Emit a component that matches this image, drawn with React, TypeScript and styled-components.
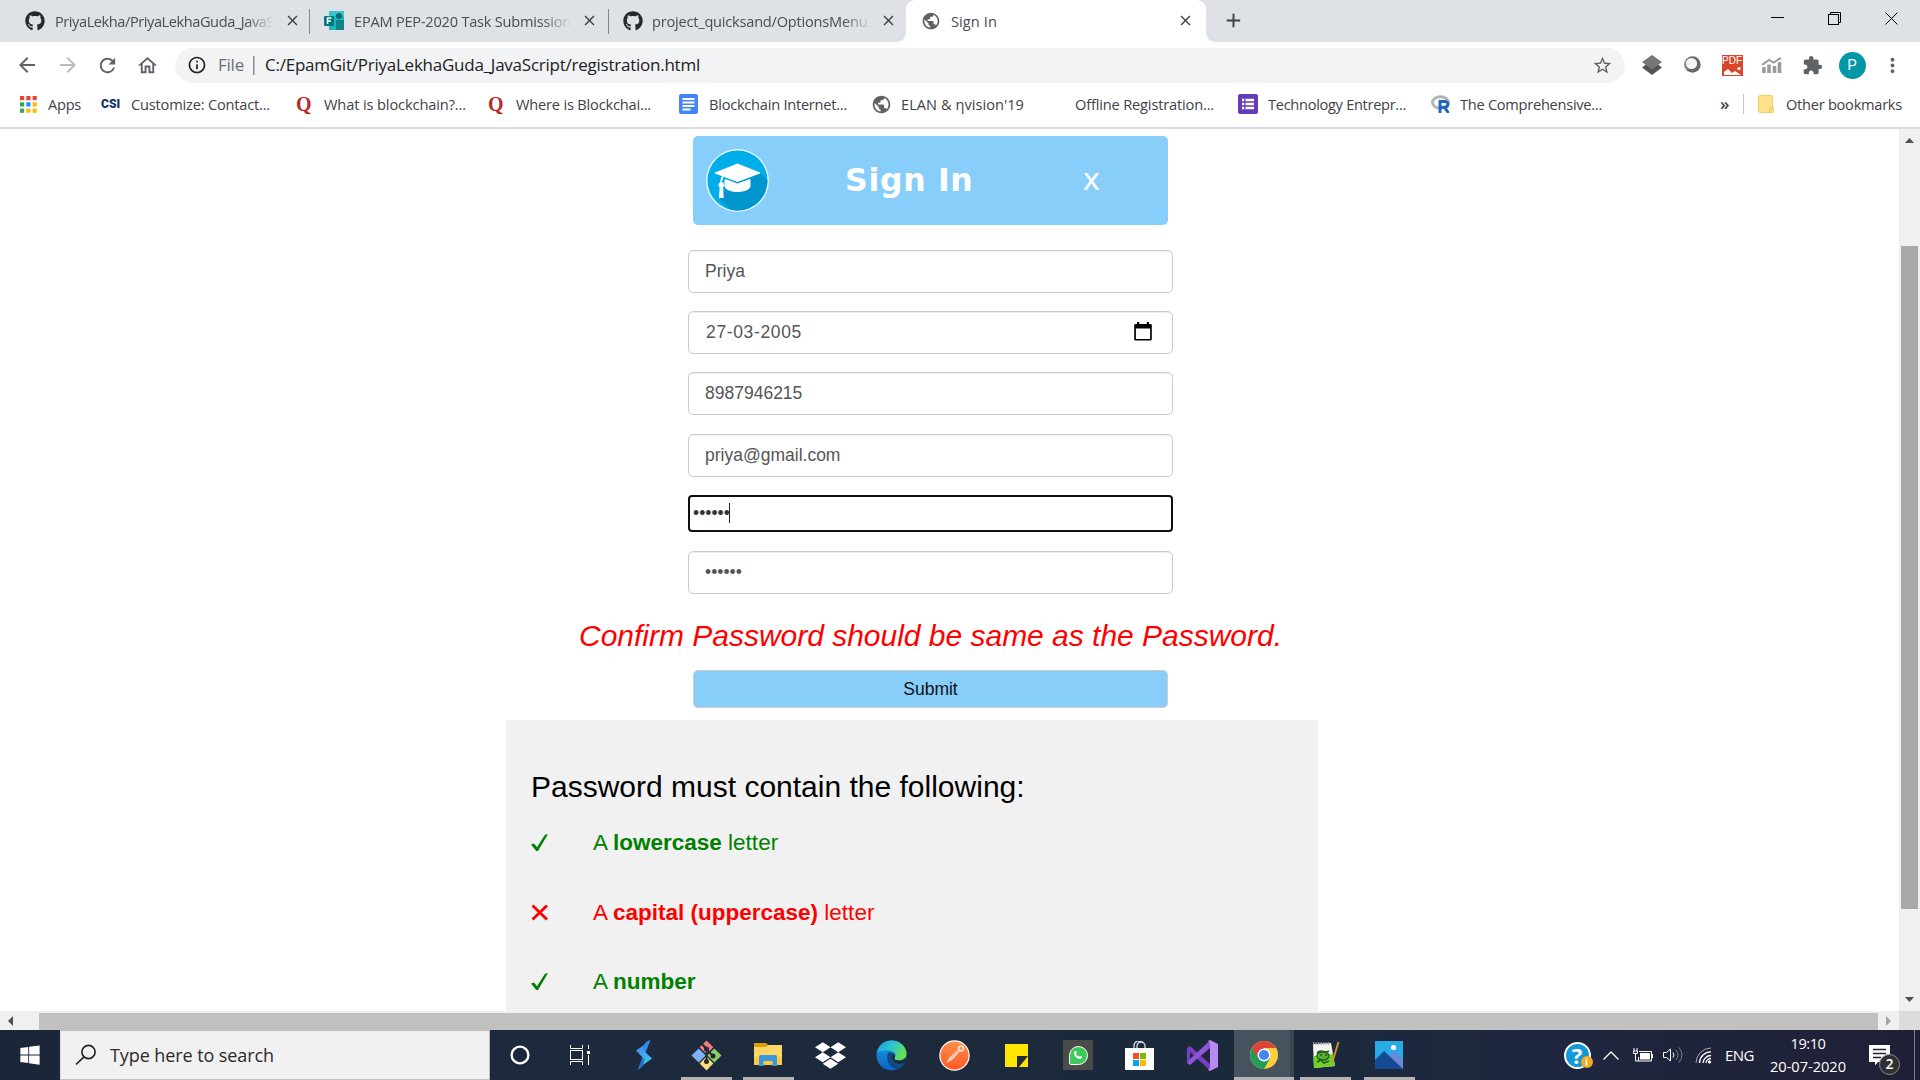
import React, { useLayoutEffect, useRef } from "react";
import styled, { createGlobalStyle, css } from "styled-components";
import {
  MdArrowBack, MdArrowForward, MdRefresh, MdOutlineHome, MdInfoOutline, MdStarBorder,
  MdExtension, MdMoreVert, MdPublic, MdClose, MdAdd,
} from "react-icons/md";
import { FaGithub, FaDropbox, FaWindows, FaWhatsapp } from "react-icons/fa";

const ui = '"Open Sans", "Noto Sans", sans-serif';
const arial = '"Liberation Sans", Arial, sans-serif';

const GlobalStyle = createGlobalStyle`
  * { box-sizing: border-box; }
  html, body { margin: 0; padding: 0; }
  body { width: 1920px; height: 1080px; overflow: hidden; background: #fff; }
  svg { display: block; flex: none; }
`;

/* ---------- text that fills a known width ---------- */
const FitBox = styled.span<{ $w: number; $fade?: boolean }>`
  display: block;
  flex: none;
  width: ${(p) => p.$w}px;
  white-space: nowrap;
  ${(p) => p.$fade && css`
    overflow: hidden;
    mask-image: linear-gradient(to right, #000 calc(100% - 28px), transparent);
  `}
`;

function Fit({ w, fade, children }: { w: number; fade?: boolean; children: string }) {
  const ref = useRef<HTMLSpanElement>(null);
  useLayoutEffect(() => {
    const el = ref.current;
    if (!el) return;
    el.style.letterSpacing = "0px";
    const natural = el.getBoundingClientRect().width;
    el.style.letterSpacing = `${(w - natural) / children.length}px`;
  }, [w, children]);
  return <FitBox $w={w} $fade={fade}><span ref={ref}>{children}</span></FitBox>;
}

/* ---------- window ---------- */
const Screen = styled.div`
  width: 1920px;
  height: 1080px;
  display: flex;
  flex-direction: column;
  overflow: hidden;
`;

const TabStrip = styled.div`
  height: 42px;
  flex: none;
  display: flex;
  background: #dee1e6;
`;

const Tab = styled.div<{ $w: number; $pad: number; $gap: number; $sep?: boolean }>`
  width: ${(p) => p.$w}px;
  padding-left: ${(p) => p.$pad}px;
  padding-bottom: 1px;
  display: flex;
  align-items: center;
  gap: ${(p) => p.$gap}px;
  font: 14.6px/20px ${ui};
  color: #4a4d51;
  background: linear-gradient(#83878c, #83878c) right 9px / ${(p) => (p.$sep ? "1px 25px" : "0 0")} no-repeat;
`;

const ActiveTab = styled(Tab)`
  position: relative;
  background: #fff;
  border-radius: 9px 9px 0 0;
  &::before, &::after {
    content: "";
    position: absolute;
    bottom: 0;
    width: 9px;
    height: 9px;
  }
  &::before { left: -9px; background: radial-gradient(circle at 0 0, transparent 8.5px, #fff 9px); }
  &::after { right: -9px; background: radial-gradient(circle at 100% 0, transparent 8.5px, #fff 9px); }
`;

const TabClose = styled.div<{ $right: number }>`
  margin-left: auto;
  margin-right: ${(p) => p.$right}px;
  width: 17px;
  color: #3c4043;
`;

const NewTab = styled.div`
  width: 55px;
  padding-bottom: 1px;
  display: flex;
  align-items: center;
  justify-content: center;
  color: #3c4043;
`;

const WindowControls = styled.div`
  margin-left: auto;
  width: 171px;
  height: 37px;
  display: flex;
  justify-content: space-around;
  align-items: center;
`;

const Toolbar = styled.div`
  height: 46px;
  flex: none;
  display: flex;
  align-items: center;
  background: #fff;
  color: #5f6368;
`;

const Nav = styled.div`
  width: 175px;
  display: flex;
  align-items: center;
  padding-left: 15px;
  gap: 16.5px;
`;

const Omnibox = styled.div`
  width: 1450px;
  height: 35px;
  border-radius: 18px;
  background: #f1f3f4;
  display: flex;
  align-items: center;
  padding: 0 12px 0 12px;
  font: 17px/24px ${ui};
  color: #202124;
`;

const Scheme = styled.div`
  margin-left: 11px;
  padding-right: 9px;
  color: #6b6f74;
`;

const Address = styled.div`
  padding-left: 12px;
  background: linear-gradient(#8b8f94, #8b8f94) left center / 1.5px 19px no-repeat;
`;

const StarSlot = styled.div`
  margin-left: auto;
`;

const Extensions = styled.div`
  display: flex;
  align-items: center;
  padding-left: 7px;
`;

const ExtSlot = styled.div`
  width: 40px;
  display: flex;
  justify-content: center;
`;

const Avatar = styled.div`
  width: 27px;
  height: 27px;
  border-radius: 50%;
  background: #0097a7;
  color: #fff;
  font: 15px/27px Roboto, sans-serif;
  text-align: center;
`;

const Bookmarks = styled.div`
  height: 41px;
  flex: none;
  display: flex;
  align-items: center;
  padding: 0 0 7px 0;
  border-bottom: 2px solid #dadce0;
  font: 14.6px/20px ${ui};
  color: #3f4246;
`;

const Bookmark = styled.div<{ $at: number; $gap: number }>`
  display: flex;
  align-items: center;
  gap: ${(p) => p.$gap}px;
  margin-left: ${(p) => p.$at}px;
`;

const Csi = styled.span`
  width: 20px;
  font: 900 12px/14px Roboto, sans-serif;
  color: #10306a;
`;

const Quora = styled.span`
  width: 16px;
  font: bold 20px/20px "Liberation Serif", serif;
  color: #b92b27;
`;

const BookmarksEnd = styled.div`
  margin-left: auto;
  margin-right: 18px;
  display: flex;
  align-items: center;
`;

const More = styled.span`
  width: 23px;
  font-size: 17px;
  line-height: 16px;
  font-weight: 600;
`;

const Divider = styled.span`
  width: 1px;
  height: 20px;
  background: #c6c9cd;
  margin-right: 14px;
`;

/* ---------- page ---------- */
const Viewport = styled.div`
  height: 882px;
  flex: none;
  display: flex;
`;

const Page = styled.div`
  width: 1899px;
  height: 882px;
  overflow: hidden;
  background: #fff;
  font-family: ${arial};
`;

const Form = styled.div`
  width: 1861px;
  padding-top: 7px;
  display: flex;
  flex-direction: column;
  align-items: center;
`;

const Banner = styled.div`
  width: 475px;
  height: 89px;
  margin-bottom: 25px;
  padding-left: 13px;
  border-radius: 5px;
  background: #87cefa;
  display: flex;
  align-items: center;
  color: #fff;
  font-family: "DejaVu Sans", Verdana, sans-serif;
`;

const BannerTitle = styled.h2`
  margin: 0 0 2px 76px;
  font-size: 31.5px;
  line-height: 36px;
  font-weight: bold;
`;

const BannerClose = styled.div`
  margin-left: 109px;
  margin-bottom: 2px;
  font-size: 30px;
  line-height: 36px;
`;

const Field = styled.div<{ $h?: number; $mb?: number; $focus?: boolean }>`
  width: 485px;
  height: ${(p) => p.$h ?? 43}px;
  margin-bottom: ${(p) => p.$mb ?? 18}px;
  padding: 0 20px 2px ${(p) => (p.$focus ? 3 : 16)}px;
  border: ${(p) => (p.$focus ? "2px solid #101010" : "1px solid #ccc")};
  border-radius: ${(p) => (p.$focus ? 4 : 5)}px;
  box-shadow: ${(p) => (p.$focus ? "none" : "inset 0 1px 1px rgba(0,0,0,.075)")};
  display: flex;
  align-items: center;
  font-size: 17.5px;
  line-height: 24px;
  color: ${(p) => (p.$focus ? "#333" : "#555")};
`;

const DateValue = styled.div`
  margin-left: 1px;
`;

const CalendarSlot = styled.div`
  margin-left: auto;
`;

const Caret = styled.span`
  width: 1px;
  height: 20px;
  margin-left: -1px;
  background: #222;
`;

const ErrorText = styled.div`
  margin-top: 24px;
  height: 52px;
  font-size: 30px;
  line-height: 36px;
  font-style: italic;
  color: #f00;
`;

const Submit = styled.div`
  width: 475px;
  height: 38px;
  border: 1px solid #ccc;
  border-radius: 5px;
  background: #87cefa;
  color: #111;
  text-align: center;
  font-size: 17.5px;
  line-height: 36px;
`;

const Rules = styled.div`
  margin: 12px 0 0 506px;
  width: 812px;
  height: 400px;
  padding: 49px 25px;
  background: #f1f1f1;
`;

const RulesTitle = styled.h3`
  margin: 0 0 20px;
  font-weight: normal;
  font-size: 30px;
  line-height: 36px;
  color: #000;
`;

const Rule = styled.div<{ $ok?: boolean }>`
  height: 69.6px;
  display: flex;
  align-items: flex-start;
  gap: 44px;
  padding-top: 5px;
  font-size: 22.5px;
  line-height: 26px;
  color: ${(p) => (p.$ok ? "green" : "red")};
  svg { margin-top: 4px; }
`;

/* ---------- scrollbars ---------- */
const VScroll = styled.div`
  width: 21px;
  height: 882px;
  background: #f0f0f0;
  display: flex;
  flex-direction: column;
  align-items: center;
  padding: 7px 0;
`;

const VThumb = styled.div`
  width: 17px;
  height: 663px;
  margin: 101px 0 auto;
  background: #a8a8a8;
`;

const HScroll = styled.div`
  height: 19px;
  flex: none;
  display: flex;
  align-items: center;
  background: #f0f0f0;
`;

const ArrowLeft = styled.svg`
  margin-left: 8px;
`;

const HThumb = styled.div`
  width: 1839px;
  height: 17px;
  margin: 2px 8px 0 26px;
  background: #c1c1c1;
`;

const Corner = styled.div`
  margin-left: auto;
  width: 21px;
  height: 19px;
  background: #dcdcdc;
`;

/* ---------- taskbar ---------- */
const Taskbar = styled.div`
  height: 50px;
  flex: none;
  display: flex;
  background: linear-gradient(90deg, #1b2739 0%, #1d2a3d 30%, #1b2a3b 65%, #1f2740 80%, #1f2036 100%);
  color: #fff;
  font-family: ${ui};
`;

const Start = styled.div`
  width: 60px;
  display: flex;
  align-items: center;
  justify-content: center;
`;

const Search = styled.div`
  width: 430px;
  border: 1px solid #bfbfbf;
  border-left-color: #dcdcdc;
  background: #f1f1f1;
  display: flex;
  align-items: center;
  padding-left: 14px;
  gap: 13px;
  font-size: 18px;
  line-height: 24px;
  color: #2b2b2b;
`;

const TaskButton = styled.div<{ $w: number; $line?: number; $hot?: boolean }>`
  width: ${(p) => p.$w}px;
  height: 50px;
  display: flex;
  align-items: center;
  justify-content: center;
  background:
    linear-gradient(#b5b4b2, #b5b4b2) center bottom / ${(p) => p.$line ?? 0}px 3px no-repeat
    ${(p) => (p.$hot ? ", linear-gradient(90deg, #47525f 56px, #3a4552 56px)" : "")};
`;

const Tray = styled.div`
  margin-left: auto;
  display: flex;
  align-items: center;
`;

const TraySlot = styled.div<{ $w: number }>`
  width: ${(p) => p.$w}px;
  display: flex;
  justify-content: center;
`;

const Lang = styled.div`
  margin-left: 6px;
  font-size: 15px;
  line-height: 20px;
`;

const Clock = styled.div`
  margin-left: 16px;
  display: flex;
  flex-direction: column;
  align-items: center;
  font-size: 14.6px;
  line-height: 23px;
`;

const Notice = styled.div`
  position: relative;
  margin-left: 23px;
  width: 46px;
  height: 50px;
  padding-top: 15px;
  border-right: 1px solid #7c7f8c;
  margin-right: 5px;
`;

const Badge = styled.div`
  position: absolute;
  left: 10px;
  top: 24px;
  width: 21px;
  height: 21px;
  border-radius: 50%;
  border: 1px solid #8c8c8c;
  background: #2f3034;
  font: 600 14px/18px ${ui};
  text-align: center;
`;

/* ---------- drawings ---------- */
const FormsTeal = () => (
  <svg width="20" height="19" viewBox="0 0 20 19">
    <rect x="5" width="15" height="19" fill="#1fb5b8" />
    <rect x="5" width="15" height="5" fill="#37c6d0" />
    <circle cx="15" cy="5" r="3" fill="#0b6a71" />
    <rect x="12" y="9" width="8" height="10" fill="#0f8387" />
    <rect x="0" y="5" width="10" height="10" rx="1" fill="#03787c" />
    <path d="M3.500 13V7h4M3.500 10h3.500" stroke="#fff" strokeWidth="1.500" fill="none" />
  </svg>
);
const AppsGrid = () => (
  <svg width="17" height="17" viewBox="0 0 17 17">
    {["#ea4335", "#ea4335", "#ea4335", "#34a853", "#1a8cff", "#fbbc04", "#34a853", "#fbbc04", "#fbbc04"].map((c, i) => (
      <rect key={i} x={(i % 3) * 6.3} y={Math.floor(i / 3) * 6.3} width="4.200" height="4.200" fill={c} />
    ))}
  </svg>
);
const DocIcon = () => (
  <svg width="19" height="20" viewBox="0 0 19 20">
    <rect width="19" height="20" rx="2" fill="#4285f4" />
    <path d="M3.500 5h12M3.500 8.500h12M3.500 12h12M3.500 15.500h8" stroke="#fff" strokeWidth="1.900" />
  </svg>
);
const FormIcon = () => (
  <svg width="20" height="20" viewBox="0 0 20 20">
    <rect width="20" height="20" rx="2" fill="#673ab7" />
    <path d="M4 6h2.200M4 10h2.200M4 14h2.200M7.500 6H16M7.500 10H16M7.500 14H16" stroke="#fff" strokeWidth="2.300" />
  </svg>
);
const RIcon = () => (
  <svg width="20" height="18" viewBox="0 0 20 18">
    <ellipse cx="9.500" cy="7.500" rx="8" ry="5.800" fill="none" stroke="#b1b4ba" strokeWidth="3" />
    <path d="M9 18V6.500h5a2.900 2.900 0 0 1 0 5.800H9M13.500 12.300L17.500 18" fill="none" stroke="#2166bd" strokeWidth="2.900" />
  </svg>
);
const FolderSmall = () => (
  <svg width="16" height="18" viewBox="0 0 16 18">
    <path d="M1.500.5h12a1 1 0 0 1 1 1V12l1 1v3.500a1 1 0 0 1-1 1h-13a1 1 0 0 1-1-1v-15a1 1 0 0 1 1-1z" fill="#ffe18a" stroke="#f5ce5b" />
    <path d="M12 17.500V14l2.500-2" fill="none" stroke="#efbd36" />
  </svg>
);
const Layers = () => (
  <svg width="20" height="20" viewBox="0 0 20 20">
    <path d="M0 12.500L10 5l10 7.500L10 20z" fill="#555" />
    <path d="M0 7L10 0l10 7-10 7.500z" fill="#777" />
  </svg>
);
const Ring = () => (
  <svg width="17" height="18" viewBox="0 0 17 18">
    <circle cx="8.500" cy="8.500" r="8.200" fill="#67696c" />
    <circle cx="7.500" cy="7.500" r="5.600" fill="#f6f6f6" />
    <path d="M3 14a8 8 0 0 1-1-10" stroke="#aaa" fill="none" strokeWidth="1.500" />
  </svg>
);
const PdfTile = styled.div`
  width: 21px;
  height: 21px;
  background: #d9472b;
  color: #fff;
  font: 10px/11px "Liberation Sans", sans-serif;
  text-align: center;
`;
const Pdf = () => (
  <PdfTile>
    PDF
    <svg width="21" height="10" viewBox="0 0 21 10">
      <path d="M2 9V6l4-3 4 4 3-2 6 4z" fill="#fff" />
      <circle cx="17" cy="2.500" r="1.600" fill="#fff" />
    </svg>
  </PdfTile>
);
const ChartGray = () => (
  <svg width="20" height="16" viewBox="0 0 20 16" stroke="#9b9b9b" fill="none">
    <path d="M2 16V10M7 16V7.500M12.500 16V9M17.500 16V5" strokeWidth="3.600" />
    <path d="M0 9.500L7 4.500l4.500 3L19 2" stroke="#fff" strokeWidth="2.500" />
    <path d="M0 8L7 3l4.500 2.500L19 .8" strokeWidth="2" />
  </svg>
);
const GradLogo = () => (
  <svg width="63" height="63" viewBox="0 0 63 63">
    <defs><clipPath id="disc"><circle cx="31.500" cy="31.500" r="30" /></clipPath></defs>
    <circle cx="31.500" cy="31.500" r="31.500" fill="#e4f4fd" />
    <circle cx="31.500" cy="31.500" r="30" fill="#00adeb" />
    <path clipPath="url(#disc)" d="M13 49l20-24 21-1 12 12v30H30z" fill="#0095cd" />
    <path d="M31.500 15L54 24 31.500 32.500 9 24z" fill="#fff" stroke="#fff" strokeLinejoin="round" />
    <path d="M19 30.500L31.500 35 44 30.500V38c-3 6-22 6-25 0z" fill="#fff" stroke="#fff" strokeLinejoin="round" />
    <path d="M17 27.500c-2 2-2 4-2 9" stroke="#fff" strokeWidth="1.800" fill="none" />
    <circle cx="15.300" cy="36" r="2.800" fill="#fff" />
    <path d="M13.800 37h3.200l.7 12h-4.800z" fill="#fff" />
  </svg>
);
const Calendar = () => (
  <svg width="18" height="19" viewBox="0 0 18 19">
    <path d="M3 0h2.200v2h7.600V0H15v2h1.500a1.300 1.300 0 0 1 1.300 1.300v14A1.300 1.300 0 0 1 16.500 18.600h-15A1.300 1.300 0 0 1 .2 17.300v-14A1.300 1.300 0 0 1 1.500 2H3z" fill="#000" />
    <rect x="1.900" y="6.500" width="14.200" height="10.500" fill="#fff" />
  </svg>
);
const Check = () => (
  <svg width="18" height="18" viewBox="0 0 18 18">
    <path d="M0 10.500L3 9.400 6 13.200 13.800 1Q14.500.3 17 0L7 17H5.200z" fill="green" />
  </svg>
);
const Cross = () => (
  <svg width="18" height="18" viewBox="0 0 18 18">
    <path d="M1.500 1.500L16 15.500M16 1.500L1.500 15.500" stroke="red" strokeWidth="2.800" />
  </svg>
);
const Magnifier = () => (
  <svg width="22" height="22" viewBox="0 0 22 22" fill="none" stroke="#222" strokeWidth="1.600">
    <circle cx="13.500" cy="8" r="6.600" /><path d="M9 12.800L1 20.500" />
  </svg>
);
const Cortana = () => (
  <svg width="20" height="20" viewBox="0 0 20 20"><circle cx="10" cy="10" r="8.400" fill="none" stroke="#fff" strokeWidth="2.400" /></svg>
);
const TaskView = () => (
  <svg width="20" height="20" viewBox="0 0 20 20" fill="none" stroke="#fff">
    <path d="M.5 0v3.500h12V0M.5 20v-3.500h12V20M18.500 0v4M18.500 10v10" /><rect x=".5" y="5.500" width="12" height="9" /><rect x="17.500" y="6.500" width="2" height="2" fill="#fff" />
  </svg>
);
const Wing = () => (
  <svg width="16" height="30" viewBox="0 0 16 30">
    <defs>
      <linearGradient id="wa" x1="0" y1="0" x2="1" y2="1"><stop offset="0" stopColor="#4d7cff" /><stop offset="1" stopColor="#38d6e6" /></linearGradient>
    </defs>
    <path d="M14.500 0Q10 1 8 5L5 11l4 3z" fill="#2f8fe8" />
    <path d="M1.500 30Q6 28 8 24l4-8-4-3z" fill="#2771c7" />
    <path d="M8 5L0 10.500l8.500 9L7 25l9-6.500L7 10z" fill="url(#wa)" />
  </svg>
);
const GitIcon = () => (
  <svg width="31" height="31" viewBox="0 0 31 31">
    <path d="M15.500.5l6.800 6.800-6.800 7-6.800-7z" fill="#f47d7f" />
    <path d="M23.300 8.500l7.200 7-7.200 7-7-7z" fill="#8ad163" />
    <path d="M7.700 8.500l7 7-7 7-7.200-7z" fill="#80b0f8" />
    <path d="M15.500 16.500l6.800 7-6.800 7-6.800-7z" fill="#fde07c" />
    <g stroke="#222b33" strokeWidth="2" fill="#222b33"><path d="M11 4l4.500 5v13M16 10l6 6" fill="none" /><circle cx="15.500" cy="9" r="1.500" /><circle cx="15.500" cy="21.500" r="1.500" /><circle cx="22" cy="16" r="1.500" /></g>
  </svg>
);
const Explorer = () => (
  <svg width="28" height="24" viewBox="0 0 28 24">
    <path d="M0 0h12l2 2v4H0z" fill="#e09a07" />
    <path d="M0 4h12l2-2h14v20H0z" fill="#ffd766" />
    <path d="M0 14h28v8H0z" fill="#fccb43" />
    <path d="M5 23V13.500a1.500 1.500 0 0 1 1.500-1.500h15a1.500 1.500 0 0 1 1.500 1.500V23h-4.500v-5h-9v5z" fill="#3c97dc" />
  </svg>
);
const Edge = () => (
  <svg width="31" height="31" viewBox="0 0 31 31">
    <defs>
      <linearGradient id="ea" x1="0" y1="0" x2="1" y2=".5"><stop offset="0" stopColor="#1b9ae0" /><stop offset=".5" stopColor="#2cc3d5" /><stop offset="1" stopColor="#66e04f" /></linearGradient>
      <linearGradient id="eb" x1="0" y1="0" x2="0" y2="1"><stop offset="0" stopColor="#1a9de0" /><stop offset="1" stopColor="#0a63c4" /></linearGradient>
    </defs>
    <circle cx="15.500" cy="15.500" r="15" fill="url(#eb)" />
    <path d="M1 12C3 4 9 .5 15.500.5c9 0 15 6.500 15 13 0 4-3 7-7.500 7-3 0-5-1-4.500-2 3-5-1-8-6-8C8 10.500 3 11 1 12z" fill="url(#ea)" />
    <path d="M12 13c-3 8 2 16 10 16 3-1 5-3 6.500-6-5 2-10 1-12-3-1-2-1-5 1-6-2-2-4.500-2-5.500-1z" fill="#114a8b" />
    <path d="M17.500 13.500c2 1.500 2 3 1 5-.5 1 1.500 2 4.500 2 3 0 5-1 6-2.500l2 1-2.500 4c-5 2-10 1-12-3-1-2-1-5 1-6.500z" fill="#1c2a3d" />
  </svg>
);
const Postman = () => (
  <svg width="31" height="31" viewBox="0 0 31 31">
    <defs><linearGradient id="pm" x1="0" y1="0" x2="0" y2="1"><stop offset="0" stopColor="#ff9150" /><stop offset="1" stopColor="#ff5722" /></linearGradient></defs>
    <circle cx="15.500" cy="15.500" r="14.600" fill="url(#pm)" stroke="#fff" strokeWidth="1.200" />
    <circle cx="22" cy="8.500" r="2.300" fill="none" stroke="#fff" strokeWidth="1.200" />
    <path d="M21 11L14 19l-7 4.500L11 17l8-7.500z" fill="#ffe3d6" />
    <path d="M12 18l8-8" stroke="#ff7d45" strokeWidth=".8" />
  </svg>
);
const Sticky = () => (
  <svg width="23" height="23" viewBox="0 0 23 23"><path d="M0 0h23v12H12v11H0z" fill="#ffe600" /><path d="M12 23V12h11z" fill="#222b3a" /><path d="M14 23l9-11v11z" fill="#ffe600" /></svg>
);
const WhatsTile = styled.div`
  width: 30px;
  height: 30px;
  background: #4b4b4b;
  display: flex;
  align-items: center;
  justify-content: center;
`;
const WhatsBubble = styled.div`
  width: 19px;
  height: 19px;
  border-radius: 10px 10px 10px 2px;
  border: 1.5px solid #fff;
  background: #3fc95c;
  display: flex;
  align-items: center;
  justify-content: center;
`;
const Handset = () => (
  <svg width="10" height="10" viewBox="0 0 10 10">
    <path d="M1 2.500C1.500.8 3 .8 3.300 1.600l.5 1.300-.8 1.100q.8 1.700 2.800 2.700l1-.9 1.900.9c.8.5 0 2.300-1.700 2.300C4 9 .7 5.500 1 2.500z" fill="#fff" />
  </svg>
);
const Store = () => (
  <svg width="29" height="29" viewBox="0 0 29 29">
    <path d="M9 8V5a5 5 0 0 1 9-3M12 8V5a4 4 0 0 1 8 0v3" fill="none" stroke="#ddd" strokeWidth="1.300" />
    <rect y="7" width="29" height="22" fill="#fff" />
    <rect x="8" y="12" width="6" height="6" fill="#f25022" /><rect x="15" y="12" width="6" height="6" fill="#7fba00" />
    <rect x="8" y="19" width="6" height="6" fill="#00a4ef" /><rect x="15" y="19" width="6" height="6" fill="#ffb900" />
  </svg>
);
const VisualStudio = () => (
  <svg width="31" height="31" viewBox="0 0 31 31">
    <path d="M0 8l3-2 20 18v6.500L3 12v9l-3 2z" fill="#7a3fc0" />
    <path d="M0 23l3 2L23 8V.5L3 19z" fill="#8f55d8" />
    <path d="M23 0l8 4v23l-8 4-2-1 2-2V3l-2-2z" fill="#b98af2" />
  </svg>
);
const Chrome = () => (
  <svg width="28" height="28" viewBox="0 0 28 28">
    <circle cx="14" cy="14" r="14" fill="#ffcd40" />
    <path d="M14 14L1.900 7A14 14 0 0 0 14 28l6-10.500z" fill="#1f9e5a" />
    <path d="M14 14V7h12.100A14 14 0 0 0 1.900 7l6.100 10.500z" fill="#dc4437" />
    <circle cx="14" cy="14" r="6.500" fill="#fff" /><circle cx="14" cy="14" r="5.100" fill="#4687f4" />
  </svg>
);
const Notepad = () => (
  <svg width="28" height="28" viewBox="0 0 28 28">
    <path d="M1 3l18-1 4 23-21 2z" fill="#f4f6ef" /><path d="M1.500 15l19.500-2 2 12-21 2z" fill="#6fd12e" />
    <path d="M1 2.500h17" stroke="#a5a5a5" strokeWidth="2.400" strokeDasharray="1.300 1.200" />
    <path d="M5 12c4-5 8 1 12-2" stroke="#255c1c" strokeWidth="1.600" fill="none" />
    <ellipse cx="11" cy="15" rx="6" ry="4" fill="#57b32b" stroke="#255c1c" strokeWidth="1.400" />
    <path d="M5 21l4-2 3 3 5-2M8 14h2M13 14h2" stroke="#255c1c" strokeWidth="1.500" fill="none" />
    <path d="M26.500 1l-5.500 18-1 3" stroke="#d3941d" strokeWidth="2" fill="none" />
  </svg>
);
const Photos = () => (
  <svg width="28" height="28" viewBox="0 0 28 28">
    <rect width="28" height="28" fill="#29abe8" /><path d="M14 15l5-5 9 8v10H14z" fill="#6b87d8" />
    <path d="M0 19l9-9 19 18H0z" fill="#164a93" /><circle cx="18.500" cy="6.500" r="2.600" fill="#fff" />
  </svg>
);
const Help = styled.div`
  position: relative;
  width: 27px;
  height: 27px;
  border-radius: 50%;
  border: 2px solid #fff;
  background: #1399d6;
  font: bold 22px/23px ${ui};
  text-align: center;
`;
const HelpDot = styled.div`
  position: absolute;
  right: -4px;
  bottom: -1px;
  width: 12px;
  height: 12px;
  border-radius: 50%;
  background: #f5a81c;
  font: bold 10px/12px ${ui};
`;

const Triangle = ({ d }: { d: string }) => (
  <svg width="9" height="9" viewBox="0 0 9 9"><path d={d} fill="#505050" /></svg>
);

export default function App() {
  return (
    <Screen>
      <GlobalStyle />
      <TabStrip>
        <Tab $w={310} $pad={25} $gap={10} $sep>
          <FaGithub size={20} color="#24292e" />
          <Fit w={219} fade>PriyaLekha/PriyaLekhaGuda_JavaS</Fit>
          <TabClose $right={12}><MdClose size={17} /></TabClose>
        </Tab>
        <Tab $w={299} $pad={14} $gap={10} $sep>
          <FormsTeal />
          <Fit w={217} fade>EPAM PEP-2020 Task Submission</Fit>
          <TabClose $right={12}><MdClose size={17} /></TabClose>
        </Tab>
        <Tab $w={297} $pad={14} $gap={9}>
          <FaGithub size={20} color="#24292e" />
          <Fit w={219} fade>project_quicksand/OptionsMenu.</Fit>
          <TabClose $right={10}><MdClose size={17} /></TabClose>
        </Tab>
        <ActiveTab $w={300} $pad={15} $gap={10}>
          <MdPublic size={20} color="#5f6368" />
          <Fit w={46}>Sign In</Fit>
          <TabClose $right={12}><MdClose size={17} /></TabClose>
        </ActiveTab>
        <NewTab><MdAdd size={23} /></NewTab>
        <WindowControls>
          <svg width="13" height="13" viewBox="0 0 13 13"><path d="M0 5.500h13" stroke="#000" /></svg>
          <svg width="13" height="13" viewBox="0 0 13 13" fill="none" stroke="#000"><rect x=".5" y="2.500" width="10" height="10" /><path d="M2.500 2V.5h10v10H11" /></svg>
          <svg width="13" height="13" viewBox="0 0 13 13"><path d="M.5.5l12 12M12.500.5l-12 12" stroke="#000" /></svg>
        </WindowControls>
      </TabStrip>

      <Toolbar>
        <Nav>
          <MdArrowBack size={24} />
          <MdArrowForward size={24} color="#babcbe" />
          <MdRefresh size={23} />
          <MdOutlineHome size={23} />
        </Nav>
        <Omnibox>
          <MdInfoOutline size={20} />
          <Scheme><Fit w={26}>File</Fit></Scheme>
          <Address><Fit w={435}>C:/EpamGit/PriyaLekhaGuda_JavaScript/registration.html</Fit></Address>
          <StarSlot><MdStarBorder size={21} color="#5f6368" /></StarSlot>
        </Omnibox>
        <Extensions>
          <ExtSlot><Layers /></ExtSlot>
          <ExtSlot><Ring /></ExtSlot>
          <ExtSlot><Pdf /></ExtSlot>
          <ExtSlot><ChartGray /></ExtSlot>
          <ExtSlot><MdExtension size={21} /></ExtSlot>
          <ExtSlot><Avatar>P</Avatar></ExtSlot>
          <ExtSlot><MdMoreVert size={23} /></ExtSlot>
        </Extensions>
      </Toolbar>

      <Bookmarks>
        <Bookmark $at={20} $gap={11}><AppsGrid /><Fit w={33}>Apps</Fit></Bookmark>
        <Bookmark $at={20} $gap={10}><Csi>CSI</Csi><Fit w={139}>Customize: Contact...</Fit></Bookmark>
        <Bookmark $at={26} $gap={12}><Quora>Q</Quora><Fit w={142}>What is blockchain?...</Fit></Bookmark>
        <Bookmark $at={22} $gap={12}><Quora>Q</Quora><Fit w={135}>Where is Blockchai...</Fit></Bookmark>
        <Bookmark $at={28} $gap={11}><DocIcon /><Fit w={138}>Blockchain Internet...</Fit></Bookmark>
        <Bookmark $at={24} $gap={9}><MdPublic size={21} color="#5f6368" /><Fit w={123}>ELAN &amp; ηvision'19</Fit></Bookmark>
        <Bookmark $at={51} $gap={0}><Fit w={139}>Offline Registration...</Fit></Bookmark>
        <Bookmark $at={24} $gap={10}><FormIcon /><Fit w={138}>Technology Entrepr...</Fit></Bookmark>
        <Bookmark $at={25} $gap={9}><RIcon /><Fit w={142}>The Comprehensive...</Fit></Bookmark>
        <BookmarksEnd>
          <More>»</More>
          <Divider />
          <Bookmark $at={0} $gap={12}><FolderSmall /><Fit w={116}>Other bookmarks</Fit></Bookmark>
        </BookmarksEnd>
      </Bookmarks>

      <Viewport>
        <Page>
          <Form>
            <Banner>
              <GradLogo />
              <BannerTitle><Fit w={128.5}>Sign In</Fit></BannerTitle>
              <BannerClose>x</BannerClose>
            </Banner>
            <Field>Priya</Field>
            <Field><DateValue><Fit w={96}>27-03-2005</Fit></DateValue><CalendarSlot><Calendar /></CalendarSlot></Field>
            <Field $mb={19}>8987946215</Field>
            <Field>priya@gmail.com</Field>
            <Field $h={37} $mb={19} $focus>••••••<Caret /></Field>
            <Field $mb={0}>••••••</Field>
            <ErrorText><Fit w={703}>Confirm Password should be same as the Password.</Fit></ErrorText>
            <Submit>Submit</Submit>
          </Form>
          <Rules>
            <RulesTitle>Password must contain the following:</RulesTitle>
            <Rule $ok><Check /><span>A <b>lowercase</b> letter</span></Rule>
            <Rule><Cross /><span>A <b>capital (uppercase)</b> letter</span></Rule>
            <Rule $ok><Check /><span>A <b>number</b></span></Rule>
          </Rules>
        </Page>
        <VScroll>
          <Triangle d="M0 7h9L4.500 2z" />
          <VThumb />
          <Triangle d="M0 2h9L4.500 7z" />
        </VScroll>
      </Viewport>
      <HScroll>
        <ArrowLeft width="5" height="10" viewBox="0 0 5 10"><path d="M5 0v10L0 5z" fill="#505050" /></ArrowLeft>
        <HThumb />
        <svg width="5" height="10" viewBox="0 0 5 10"><path d="M0 0v10l5-5z" fill="#a3a3a3" /></svg>
        <Corner />
      </HScroll>

      <Taskbar>
        <Start><FaWindows size={22} /></Start>
        <Search><Magnifier /><Fit w={164}>Type here to search</Fit></Search>
        <TaskButton $w={60}><Cortana /></TaskButton>
        <TaskButton $w={60}><TaskView /></TaskButton>
        <TaskButton $w={67}><Wing /></TaskButton>
        <TaskButton $w={58} $line={51}><GitIcon /></TaskButton>
        <TaskButton $w={66} $line={51}><Explorer /></TaskButton>
        <TaskButton $w={58}><FaDropbox size={31} /></TaskButton>
        <TaskButton $w={65}><Edge /></TaskButton>
        <TaskButton $w={60}><Postman /></TaskButton>
        <TaskButton $w={64}><Sticky /></TaskButton>
        <TaskButton $w={60}><WhatsTile><WhatsBubble><Handset /></WhatsBubble></WhatsTile></TaskButton>
        <TaskButton $w={63}><Store /></TaskButton>
        <TaskButton $w={63}><VisualStudio /></TaskButton>
        <TaskButton $w={60} $line={60} $hot><Chrome /></TaskButton>
        <TaskButton $w={63} $line={51}><Notepad /></TaskButton>
        <TaskButton $w={64} $line={51}><Photos /></TaskButton>
        <Tray>
          <TraySlot $w={34}><Help>?<HelpDot>i</HelpDot></Help></TraySlot>
          <TraySlot $w={34}>
            <svg width="16" height="9" viewBox="0 0 16 9"><path d="M.5 8.500L8 1l7.500 7.500" fill="none" stroke="#fff" strokeWidth="1.300" /></svg>
          </TraySlot>
          <TraySlot $w={30}>
            <svg width="20" height="14" viewBox="0 0 20 14" fill="none" stroke="#fff"><path d="M6 3.500h12.500v9.500h-13V9M1 0v3M4 0v3M.5 3h4v2.500h-4zM2.500 6v7h3" /><rect x="7.500" y="5.500" width="9" height="5.500" fill="#fff" /><path d="M19.500 6v4" /></svg>
          </TraySlot>
          <TraySlot $w={30}>
            <svg width="20" height="18" viewBox="0 0 20 18" fill="none" stroke="#fff"><path d="M.5 6.500h3L7.500 3v12l-4-3.500h-3zM10 6.500q2 2.500 0 5" /><path d="M13 4q4 5 0 10M16 1.500q6 7.500 0 15" stroke="#7b8090" /></svg>
          </TraySlot>
          <TraySlot $w={31}>
            <svg width="17" height="17" viewBox="0 0 17 17" fill="none" stroke="#fff"><path d="M1 16A15 15 0 0 1 16 1" stroke="#a5a8b5" /><path d="M4.500 16A11.500 11.500 0 0 1 16 4.800M8 16a8 8 0 0 1 8-7.500M11 16a5 5 0 0 1 5-4.500" strokeWidth="1.300" /><circle cx="14.500" cy="15" r="1.200" fill="#fff" /></svg>
          </TraySlot>
          <Lang><Fit w={29}>ENG</Fit></Lang>
          <Clock><Fit w={35}>19:10</Fit><Fit w={76}>20-07-2020</Fit></Clock>
          <Notice>
            <svg width="21" height="21" viewBox="0 0 21 21"><path d="M0 0h21v17H9l-3 3.500V17H0z" fill="#fff" /><path d="M4 4.500h13M4 8.500h13M4 12.500h8" stroke="#20233a" strokeWidth="1.300" /></svg>
            <Badge>2</Badge>
          </Notice>
        </Tray>
      </Taskbar>
    </Screen>
  );
}
